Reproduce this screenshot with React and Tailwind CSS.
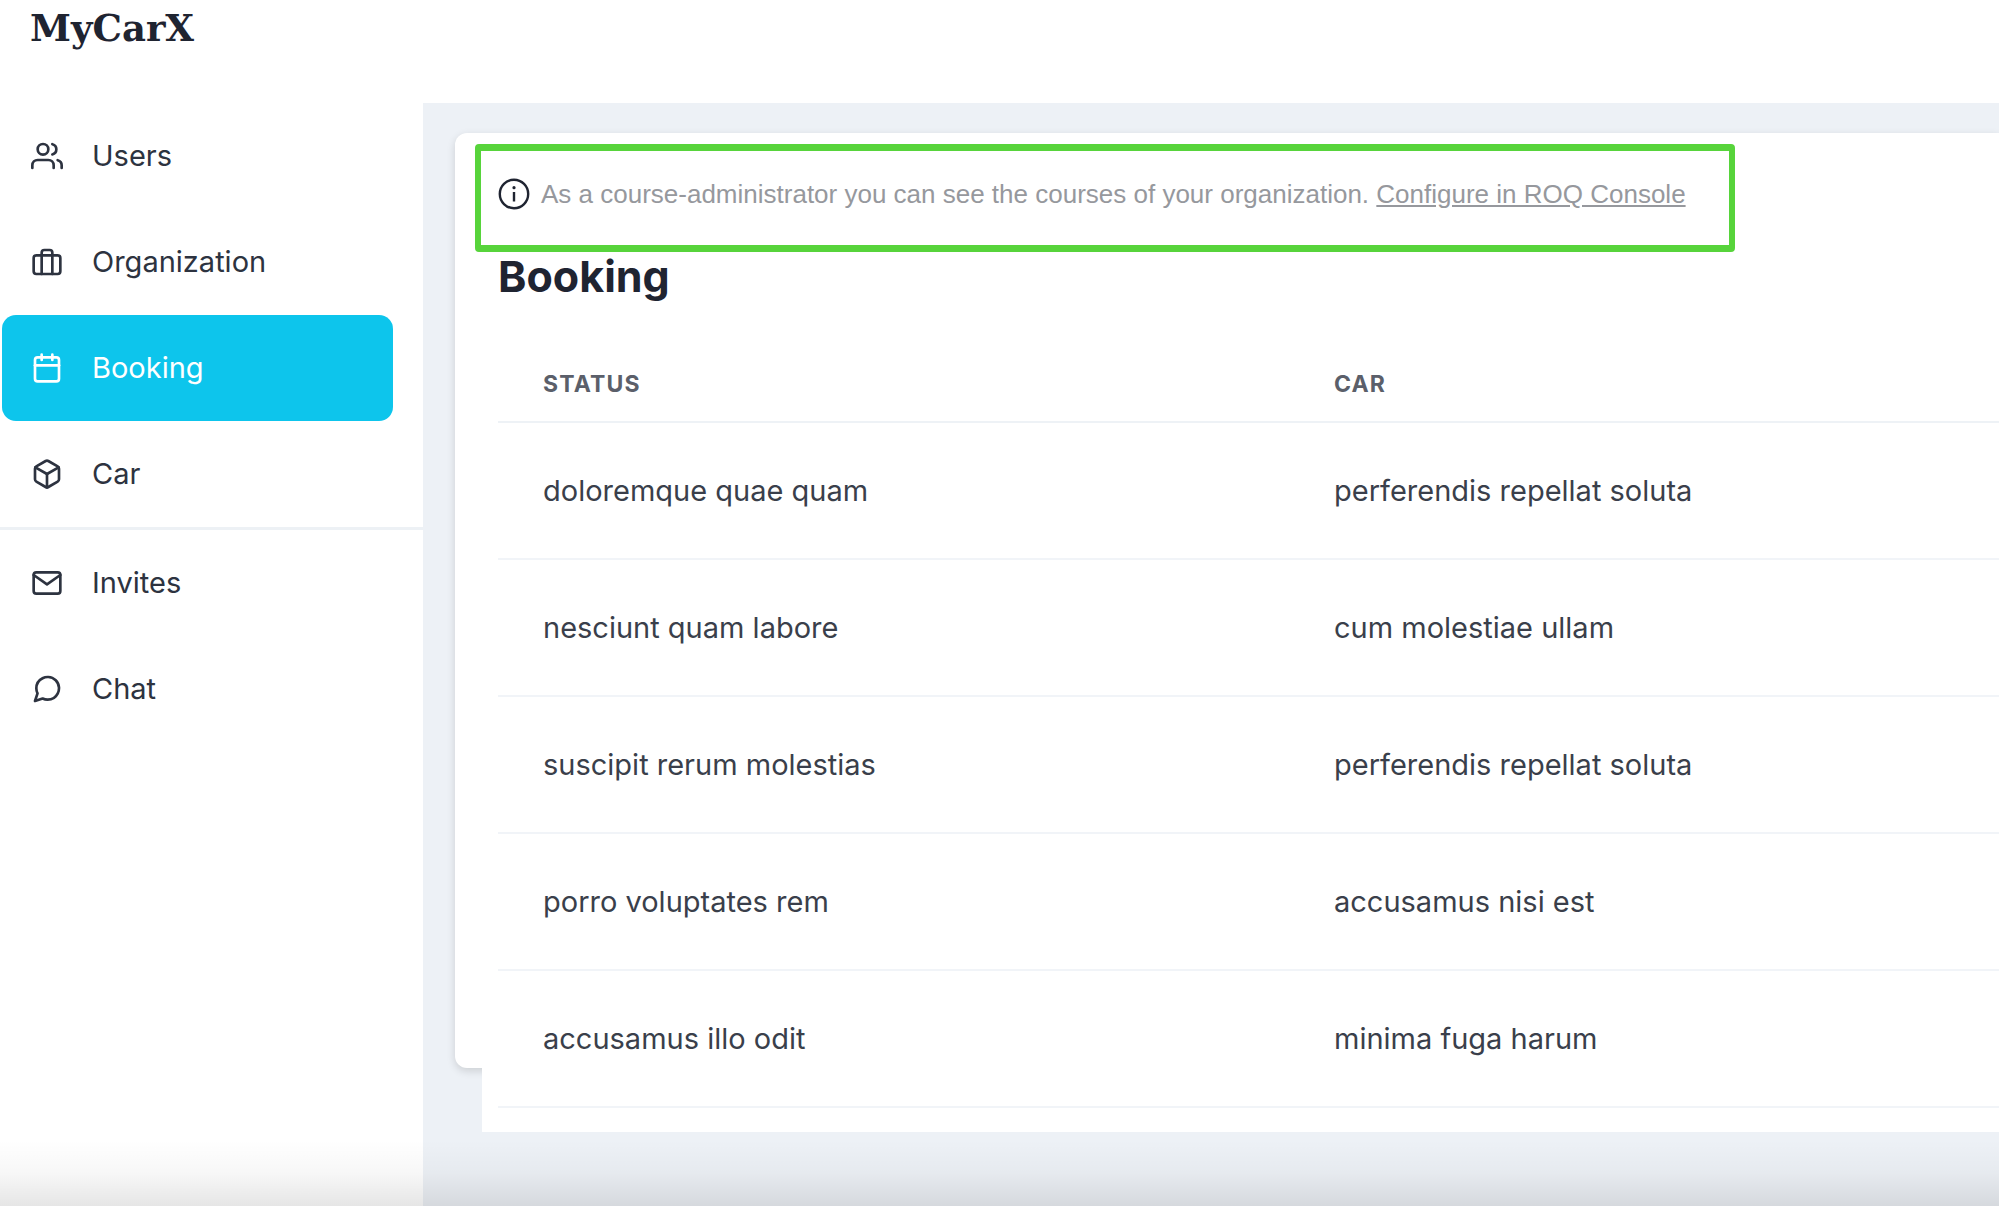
import React, { useState } from "react";
import { FiUsers, FiBriefcase, FiCalendar, FiBox, FiMail, FiMessageCircle } from "react-icons/fi";

// Sidebar navigation
const mainNav = [
  { id: "users", label: "Users", icon: FiUsers },
  { id: "organization", label: "Organization", icon: FiBriefcase },
  { id: "booking", label: "Booking", icon: FiCalendar },
  { id: "car", label: "Car", icon: FiBox },
];

const secondaryNav = [
  { id: "invites", label: "Invites", icon: FiMail },
  { id: "chat", label: "Chat", icon: FiMessageCircle },
];

const bookings = [
  { status: "doloremque quae quam", car: "perferendis repellat soluta" },
  { status: "nesciunt quam labore", car: "cum molestiae ullam" },
  { status: "suscipit rerum molestias", car: "perferendis repellat soluta" },
  { status: "porro voluptates rem", car: "accusamus nisi est" },
  { status: "accusamus illo odit", car: "minima fuga harum" },
];

const InfoIcon = () => (
  <svg width="32" height="32" viewBox="0 0 32 32" fill="none" stroke="currentColor" className="shrink-0">
    <circle cx="16" cy="16" r="14.2" strokeWidth="2.4" />
    <path d="M16 14v9.5" strokeWidth="2.4" />
    <circle cx="16" cy="9.7" r="1.6" fill="currentColor" stroke="none" />
  </svg>
);

const NavItem = ({ item, active, onSelect }) => {
  const Icon = item.icon;
  return (
    <a
      href={`#${item.id}`}
      onClick={() => onSelect(item.id)}
      aria-current={active ? "page" : undefined}
      className={`flex items-center gap-[29px] h-[106px] ml-0.5 mr-[30px] pl-[29px] rounded-[14px] text-[29px] ${
        active ? "bg-[#0dc5ec] text-white" : "text-[#2d3340]"
      }`}
    >
      <Icon size={32} />
      <span>{item.label}</span>
    </a>
  );
};

export default function App() {
  const [current, setCurrent] = useState("booking");

  return (
    <div className="relative min-h-screen flex flex-col overflow-hidden bg-white font-['Inter',sans-serif] text-[#1f2431]">
      <header className="h-[103px] pl-[30px] pt-1">
        <a href="#home" className="font-['DejaVu_Serif',serif] text-[37px] leading-[48px] font-bold">MyCarX</a>
      </header>

      <div className="flex flex-1">
        <aside className="w-[423px] shrink-0">
          <nav>
            {mainNav.map((item) => (
              <NavItem key={item.id} item={item} active={current === item.id} onSelect={setCurrent} />
            ))}
            <hr className="border-0 h-[3px] bg-[#edf1f5]" />
            {secondaryNav.map((item) => (
              <NavItem key={item.id} item={item} active={current === item.id} onSelect={setCurrent} />
            ))}
          </nav>
        </aside>

        <main className="flex-1 min-w-0 bg-[#edf1f6] pl-8 pt-[30px]">
          <section className="flow-root rounded-l-xl bg-white pt-[11px] shadow-[0_3px_8px_rgba(0,0,0,0.14)]">
            {/* Role notice */}
            <div className="ml-5 w-fit border-x-6 border-y-7 border-[#57d43b] rounded-sm pt-6 pb-8 pl-[17px] pr-[43px] flex items-center gap-[11px]">
              <InfoIcon />
              <p className="font-['Liberation_Sans',sans-serif] text-[26px] leading-[38px] text-[#96989d]">
                As a course-administrator you can see the courses of your organization.{" "}
                <a href="#console" className="underline">Configure in ROQ Console</a>
              </p>
            </div>

            {/* The list runs past the bottom edge of the card */}
            <div className="relative ml-[27px] -mb-16 bg-white pl-4 pb-6">
              <h1 className="text-[43px] leading-[48px] font-bold">Booking</h1>
              <table className="mt-11 w-full table-fixed border-collapse text-left">
                <thead>
                  <tr className="h-[78px] border-b-2 border-[#eef2f6]">
                    <th scope="col" className="w-[791px] pl-[45px] pt-1 text-[23px] font-bold tracking-wider text-[#5b5f6a]">STATUS</th>
                    <th scope="col" className="pl-[45px] pt-1 text-[23px] font-bold tracking-wider text-[#5b5f6a]">CAR</th>
                  </tr>
                </thead>
                <tbody>
                  {bookings.map((row, i) => (
                    <tr key={i} className="h-[137px] border-b-2 border-[#f1f4f8]">
                      <td className="pl-[45px] text-[29px] text-[#3a3f4b]">{row.status}</td>
                      <td className="pl-[45px] text-[29px] text-[#3a3f4b]">{row.car}</td>
                    </tr>
                  ))}
                </tbody>
              </table>
            </div>
          </section>
        </main>
      </div>

      {/* Fade along the bottom of the window */}
      <div className="pointer-events-none absolute inset-x-0 bottom-0 h-[66px] bg-linear-to-b from-transparent via-black/3 to-black/10" />
    </div>
  );
}
